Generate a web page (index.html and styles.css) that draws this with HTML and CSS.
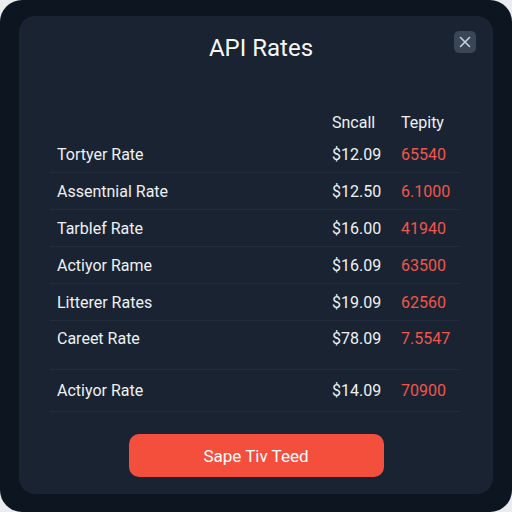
FILE: index.html
```html
<!DOCTYPE html>
<html>
<head>
<meta charset="utf-8">
<link rel="stylesheet" href="styles.css">
</head>
<body>
<div class="frame">
  <div class="card">
    <button class="close" aria-label="Close">
      <svg width="12" height="12" viewBox="0 0 12 12"><path d="M1.5 1.5 L10.5 10.5 M10.5 1.5 L1.5 10.5" stroke="#c9d0da" stroke-width="1.6" stroke-linecap="round"/></svg>
    </button>
    <h1 class="title">API Rates</h1>
    <div class="table">
      <div class="head"><span></span><span>Sncall</span><span>Tepity</span></div>
      <div class="row"><span>Tortyer Rate</span><span>$12.09</span><span class="red">65540</span></div>
      <div class="row"><span>Assentnial Rate</span><span>$12.50</span><span class="red">6.1000</span></div>
      <div class="row"><span>Tarblef Rate</span><span>$16.00</span><span class="red">41940</span></div>
      <div class="row"><span>Actiyor Rame</span><span>$16.09</span><span class="red">63500</span></div>
      <div class="row"><span>Litterer Rates</span><span>$19.09</span><span class="red">62560</span></div>
      <div class="row tall"><span>Careet Rate</span><span>$78.09</span><span class="red">7.5547</span></div>
      <div class="row last"><span>Actiyor Rate</span><span>$14.09</span><span class="red">70900</span></div>
    </div>
    <div class="actions"><button class="cta">Sape Tiv Teed</button></div>
  </div>
</div>
</body>
</html>
```
FILE: styles.css
```css
html, body { margin: 0; padding: 0; background: #e9edf0; }
body { font-family: Roboto, "Noto Sans", sans-serif; }
.frame {
  width: 512px; height: 512px; box-sizing: border-box;
  background: #0c1520; border-radius: 22px;
  padding: 16px 19px 18px 19px;
}
.card {
  position: relative;
  height: 100%; box-sizing: border-box;
  background: #1a2331; border-radius: 16px;
  padding: 18px 33px 0 31px;
}
.close {
  position: absolute; top: 15px; right: 17px;
  width: 22px; height: 22px; border: 0; border-radius: 5px;
  background: #3a4556; padding: 0;
  display: flex; align-items: center; justify-content: center;
}
.title {
  margin: 0 0 0 12px; text-align: center;
  font-size: 24px; line-height: 28px; font-weight: 400; color: #f4f6f8;
}
.table { margin-top: 46px; }
.head, .row {
  display: grid; grid-template-columns: 1fr 69px 47px;
  padding: 0 12px 0 7px; align-items: center;
  font-size: 16px; color: #eef1f4;
}
.head { height: 28px; }
.row { height: 37px; border-top: 1px solid #222c3a; box-sizing: border-box; }
.head + .row { border-top: 0; height: 36px; }
.row.tall { height: 49px; align-items: start; padding-top: 8px; }
.row.last { height: 43px; border-bottom: 1px solid #222c3a; }
.red { color: #f0564c; }
.actions { display: flex; justify-content: center; margin-top: 22px; margin-left: 2px; }
.cta {
  width: 255px; height: 43px; border: 0; border-radius: 10px;
  background: #f44f3d; color: #fff;
  font-family: Roboto, "Noto Sans", sans-serif; font-size: 17px;
}
```
